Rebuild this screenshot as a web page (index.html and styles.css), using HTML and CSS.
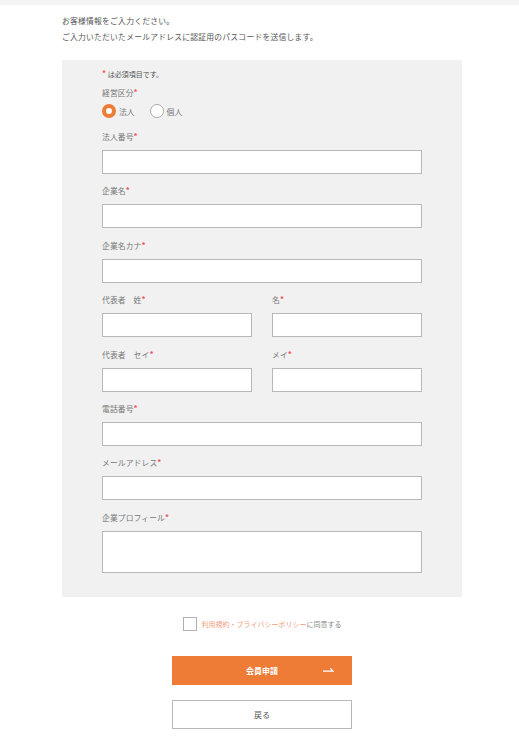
FILE: index.html
```html
<html>
<head>
<title>会員申請</title>
<link rel="stylesheet" href="styles.css">
</head>
<body>
<div class="topbar"></div>
<div id="container">
<p class="intro">お客様情報をご入力ください。<br>ご入力いただいたメールアドレスに認証用のパスコードを送信します。</p>

<div class="panel">
<p class="note"><span class="req">*</span> は必須項目です。</p>

<div class="label first">経営区分<span class="req">*</span></div>
<div class="radios">
<span class="radio on"></span><span class="rlabel">法人</span>
<span class="radio"></span><span class="rlabel">個人</span>
</div>

<div class="field">
<div class="label">法人番号<span class="req">*</span></div>
<div class="input"></div>
</div>
<div class="field">
<div class="label">企業名<span class="req">*</span></div>
<div class="input"></div>
</div>
<div class="field">
<div class="label">企業名カナ<span class="req">*</span></div>
<div class="input"></div>
</div>
<div class="field half">
<div>
<div class="label">代表者　姓<span class="req">*</span></div>
<div class="input"></div>
</div>
<div>
<div class="label">名<span class="req">*</span></div>
<div class="input"></div>
</div>
</div>
<div class="field half">
<div>
<div class="label">代表者　セイ<span class="req">*</span></div>
<div class="input"></div>
</div>
<div>
<div class="label">メイ<span class="req">*</span></div>
<div class="input"></div>
</div>
</div>
<div class="field">
<div class="label">電話番号<span class="req">*</span></div>
<div class="input"></div>
</div>
<div class="field">
<div class="label">メールアドレス<span class="req">*</span></div>
<div class="input"></div>
</div>
<div class="field">
<div class="label">企業プロフィール<span class="req">*</span></div>
<div class="input area"></div>
</div>
</div>

<div class="agree">
<span class="check"></span>
<span class="agree-text"><span class="link">利用規約・プライバシーポリシー</span>に同意する</span>
</div>

<div class="btn submit">会員申請
<svg class="arrow" width="11" height="5" viewBox="0 0 11 5"><path d="M0 4.2 H10 L7 1.2" fill="none" stroke="#fff" stroke-width="1.2"/></svg>
</div>
<div class="btn back">戻る</div>
</div>
</body>
</html>
```
FILE: styles.css
```css
body {
margin:0;
background-color:#fff;
font-family:"Noto Sans CJK JP", "Noto Sans", sans-serif;
color:#666;
}
.topbar {
height:5px;
background-color:#f4f4f4;
}
#container {
width:400px;
margin-left:62px;
}
.intro {
margin:0;
padding-top:8px;
font-size:7.8px;
letter-spacing:0.22px;
line-height:16px;
color:#555;
}
.panel {
margin-top:15px;
background-color:#f1f1f1;
padding:8px 40px 24px 40px;
}
.note {
margin:0;
font-size:7px;
line-height:12px;
color:#555;
}
.req {
color:#f0505e;
font-size:8px;
font-weight:bold;
vertical-align:top;
line-height:9px;
}
.label {
font-size:7.8px;
letter-spacing:0.1px;
line-height:12px;
margin-bottom:7px;
color:#777;
}
.label.first {
margin-top:7px;
margin-bottom:5px;
}
.radios {
display:flex;
align-items:center;
height:14px;
font-size:7.8px;
color:#777;
}
.radio {
box-sizing:border-box;
width:14px;
height:14px;
border-radius:50%;
border:1px solid #aaa;
background-color:#fff;
}
.radio.on {
border:4px solid #ee7b36;
background-color:#fff;
}
.rlabel {
margin-left:3px;
margin-right:15px;
}
.field {
margin-top:13px;
}
.field + .field {
margin-top:11.4px;
}
.half {
display:grid;
grid-template-columns:1fr 1fr;
column-gap:20px;
}
.input {
box-sizing:border-box;
height:24px;
border:1px solid #b8b8b8;
background-color:#fff;
}
.input.area {
height:42px;
}
.agree {
margin-top:20px;
display:flex;
align-items:center;
justify-content:center;
font-size:7px;
color:#888;
}
.check {
box-sizing:border-box;
width:14px;
height:14px;
border:1px solid #b0b0b0;
background-color:#fff;
margin-right:5px;
}
.link {
color:#f29d7c;
}
.btn {
box-sizing:border-box;
width:180px;
height:29px;
margin-left:110px;
display:flex;
align-items:center;
justify-content:center;
font-size:8px;
position:relative;
}
.submit {
margin-top:25px;
background-color:#ee7b36;
color:#fff;
font-weight:bold;
}
.arrow {
position:absolute;
left:151px;
top:11px;
}
.back {
margin-top:15px;
border:1px solid #b8b8b8;
background-color:#fff;
color:#555;
}
```
